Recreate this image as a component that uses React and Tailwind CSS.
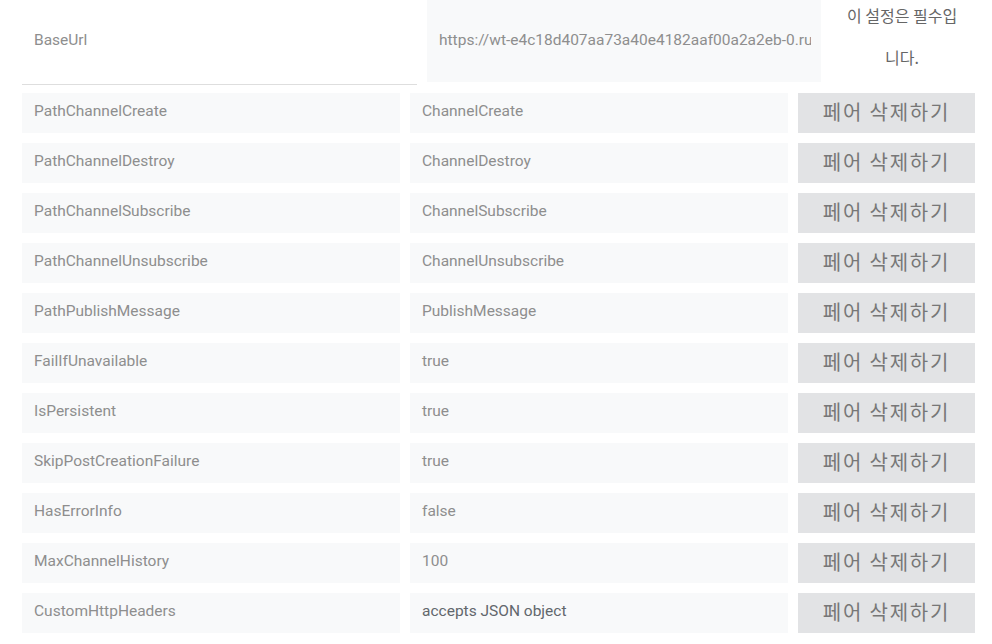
import React from "react";

// settings rows
const pairs = [
  ["PathChannelCreate", "ChannelCreate"],
  ["PathChannelDestroy", "ChannelDestroy"],
  ["PathChannelSubscribe", "ChannelSubscribe"],
  ["PathChannelUnsubscribe", "ChannelUnsubscribe"],
  ["PathPublishMessage", "PublishMessage"],
  ["FailIfUnavailable", "true"],
  ["IsPersistent", "true"],
  ["SkipPostCreationFailure", "true"],
  ["HasErrorInfo", "false"],
  ["MaxChannelHistory", "100"],
  ["CustomHttpHeaders", "accepts JSON object", true],
];

const App = () => {
  return (
    <div className="w-[992px] h-[644px] bg-white overflow-hidden font-['Roboto','Noto_Sans_CJK_KR',sans-serif] text-[15.5px]">
      {/* BASE URL ROW */}
      <div className="flex h-[84px] pl-[22px]">
        <div className="w-[395px] h-[85px] border-b border-[#dedede] flex items-center pl-3 pb-[3px] text-[#8e8e8e]">
          BaseUrl
        </div>
        <div className="ml-[10px] w-[394px] h-[82px] bg-[#f8f9fa] flex items-center pl-3 pr-[10px] pb-[1px] text-[#8e8e8e] overflow-hidden whitespace-nowrap">
          <span className="overflow-hidden">https://wt-e4c18d407aa73a40e4182aaf00a2a2eb-0.ru</span>
        </div>
        <div className="w-[162px] shrink-0 px-[14px] text-center text-[16px] leading-[42px] -mt-[6px] break-keep text-[#666] font-['Noto_Sans_CJK_KR',sans-serif]">
          이 설정은 필수입 니다.
        </div>
      </div>

      {/* PAIR ROWS */}
      <div className="flex flex-col gap-[10px] mt-[9px] pl-[22px]">
        {pairs.map(([k, v, dark], i) => (
          <div key={i} className="flex gap-[10px] h-[40px]">
            <div className="w-[378px] bg-[#f8f9fa] flex items-center pl-3 pb-[3px] text-[#8e8e8e]">{k}</div>
            <div className={`w-[378px] bg-[#f8f9fa] flex items-center pl-3 pb-[3px] ${dark ? "text-[#62676c]" : "text-[#8e8e8e]"}`}>
              {v}
            </div>
            <button className="w-[177px] bg-[#e2e3e5] text-[#777] text-[20px] tracking-[1.8px] pb-[2px] font-['Noto_Sans_CJK_KR',sans-serif] flex items-center justify-center">
              페어 삭제하기
            </button>
          </div>
        ))}
      </div>
    </div>
  );
};

export default App;
